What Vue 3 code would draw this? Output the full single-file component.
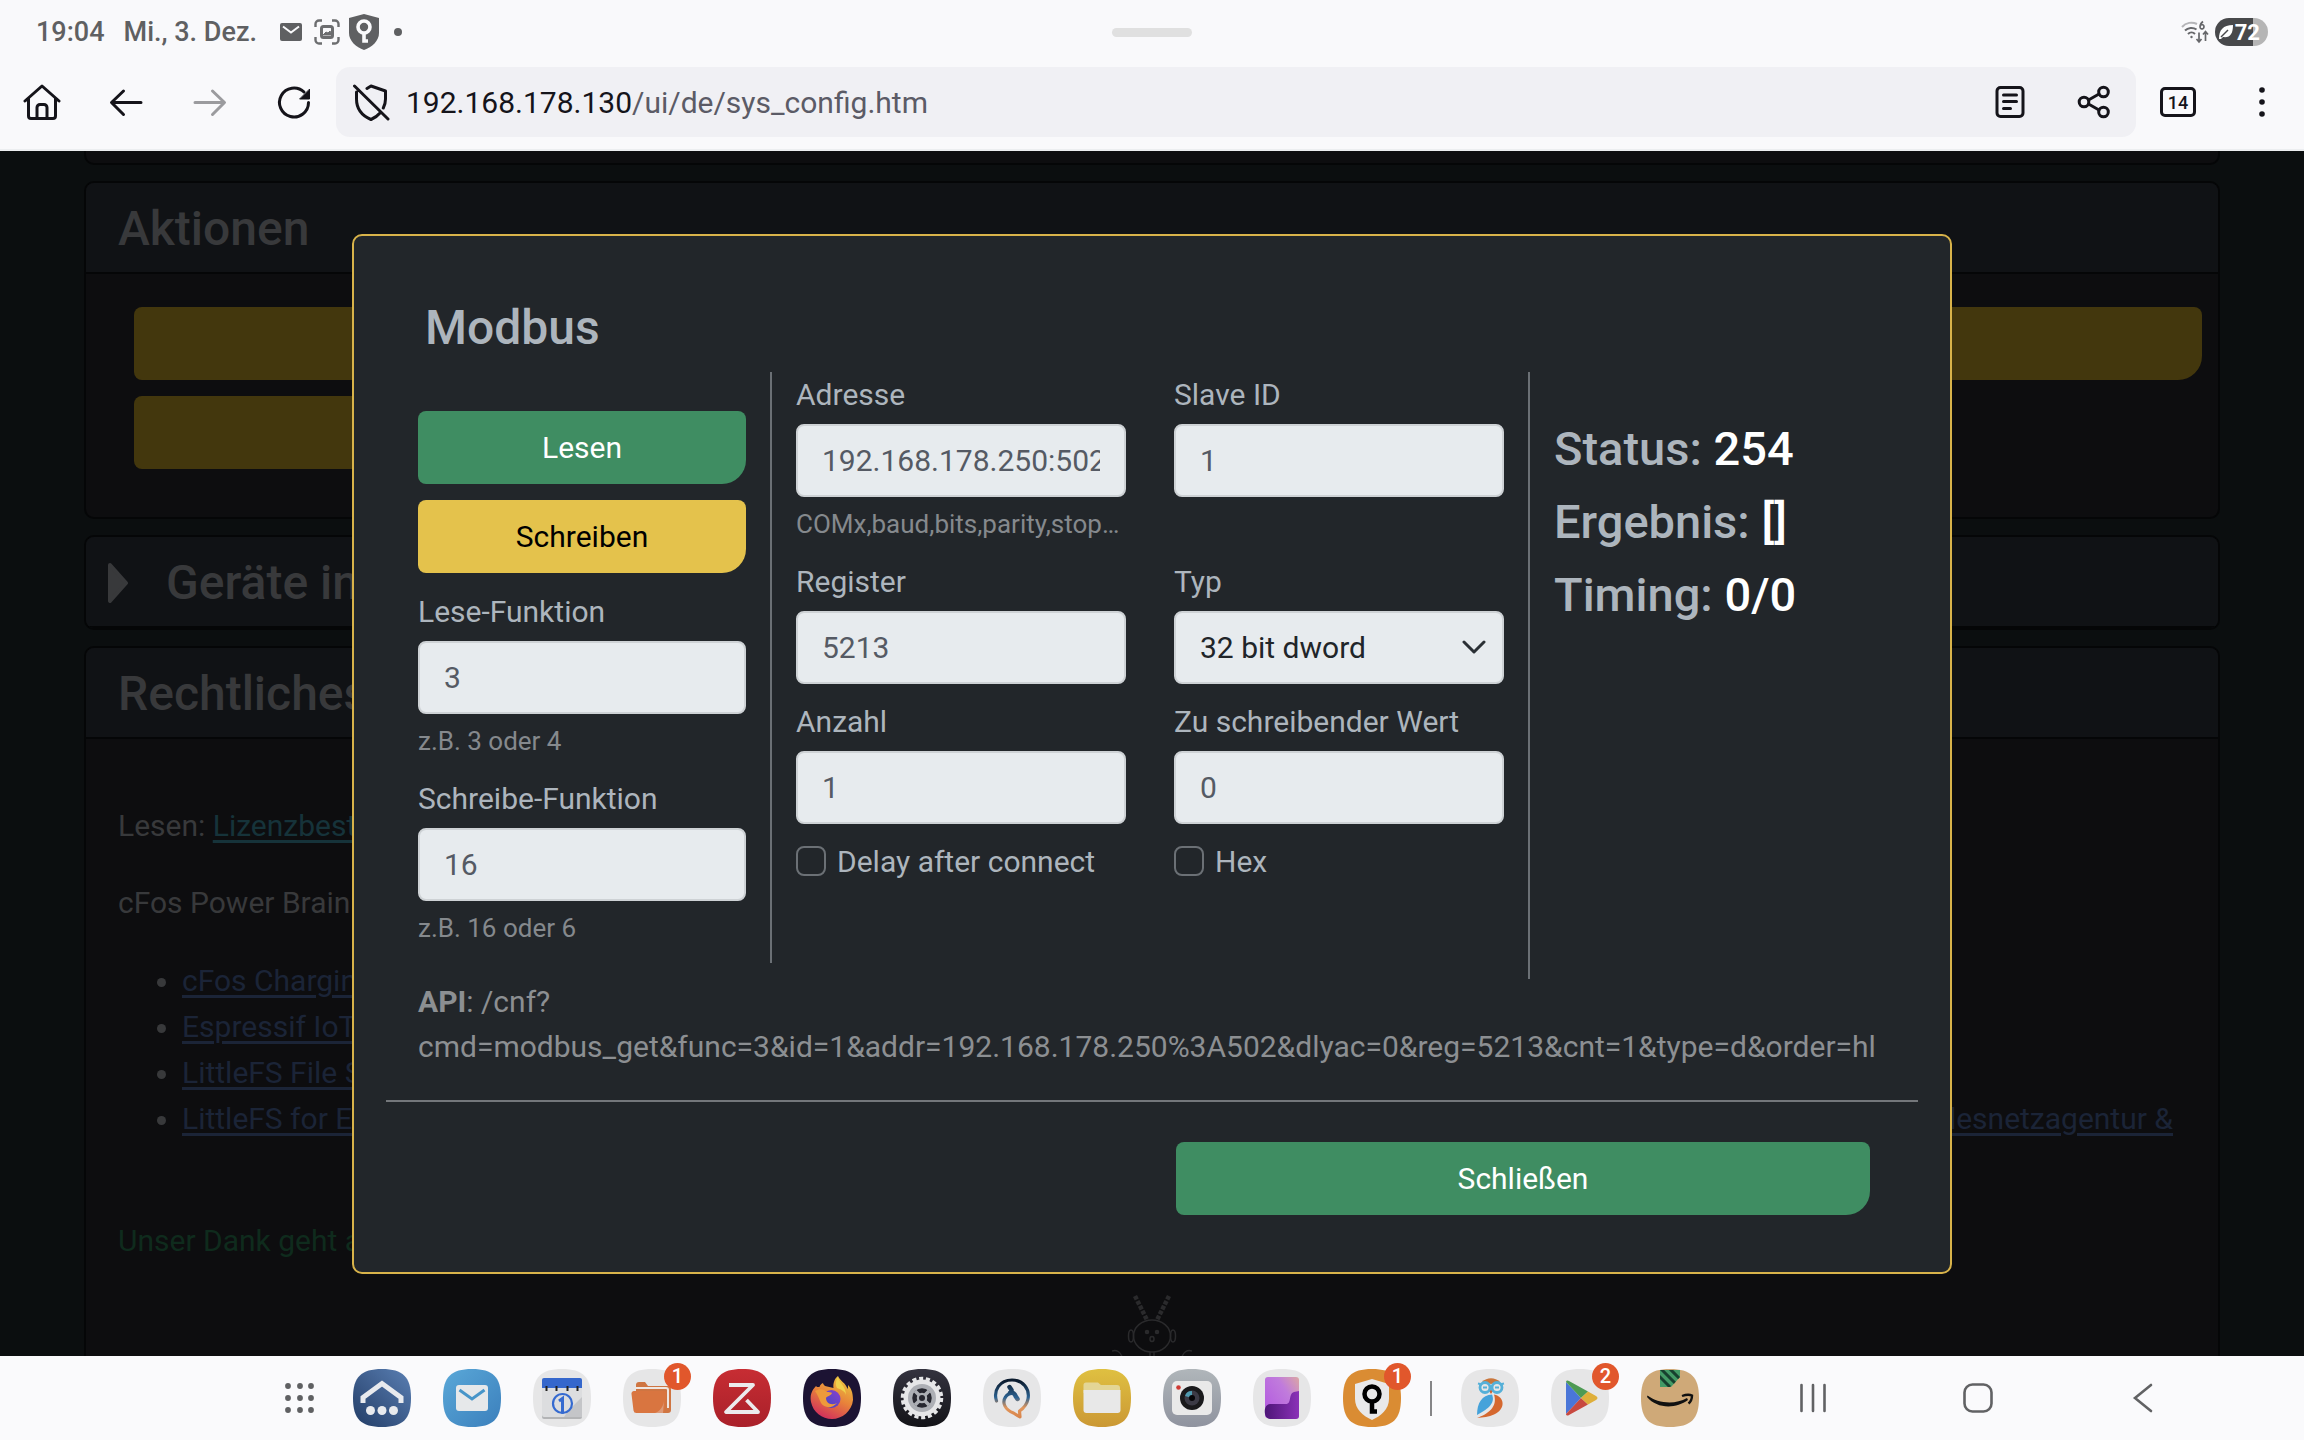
<template>
  <div class="screen">
    <header class="browser">
      <div class="status-bar">
        <div class="status-left">
          <span>19:04</span>
          <span>Mi., 3. Dez.</span>
          <span class="status-icons">
            <svg width="22" height="18" viewBox="0 0 22 18">
              <rect width="22" height="18" rx="2" fill="#5f6062" />
              <path d="M3 3.5l8 6 8-6" fill="none" stroke="#fafafc" stroke-width="2" />
            </svg>
            <svg width="26" height="26" viewBox="0 0 26 26" fill="none" stroke="#6c6d6f" stroke-width="2.4">
              <path d="M1.5 8V5a3.500 3.500 0 0 1 3.500-3.500h3M18 1.500h3a3.500 3.500 0 0 1 3.500 3.500v3M24.500 18v3a3.500 3.500 0 0 1-3.500 3.500h-3M8 24.500H5A3.500 3.500 0 0 1 1.500 21v-3" />
              <rect x="7.500" y="7.500" width="11" height="11" rx="2" stroke-width="3" />
              <path d="M9 16l3-3 2 1 2-2 2 4z" fill="#6c6d6f" stroke-width="1" />
            </svg>
            <svg width="32" height="36" viewBox="0 0 32 36">
              <path d="M16 0l15 4v15c0 8-7 14-15 17C8 33 1 27 1 19V4z" fill="#5f6062" />
              <circle cx="16" cy="13" r="6" fill="none" stroke="#fafafc" stroke-width="3.600" />
              <path d="M16 19v8h4" fill="none" stroke="#fafafc" stroke-width="3.600" />
            </svg>
            <i class="more-dot"></i>
          </span>
        </div>
        <i class="drag-handle"></i>
        <div class="status-right">
          <svg width="28" height="24" viewBox="0 0 28 24" fill="none" stroke="#66676a" stroke-width="2">
            <path d="M1 7C5 2.500 11 1.500 16 4" stroke="#b5b5b8" />
            <path d="M4 10.500c3-3 8-3.500 11.500-1" />
            <path d="M7 14c2-2 5-2 7 0" />
            <circle cx="10.500" cy="17" r="1.200" fill="#66676a" stroke="none" />
            <path d="M22 1.500c-2 1.500-3 3-3 5.500a2 2.200 0 1 0 0-.5" stroke-width="1.700" />
            <path d="M18 12.500v9M15.500 19l2.500 3 2.500-3M24.500 21v-9M22 14.500l2.500-3 2.500 3" stroke-width="1.700" />
          </svg>
          <span class="battery">
            <svg width="14" height="16" viewBox="0 0 14 16">
              <path d="M0 15C0 6 4 1 14 1c0 9-3 13-10 12l-2 2z" fill="#fff" />
              <path d="M2 13l7-7" stroke="#48494b" stroke-width="1.500" />
            </svg>
            72
          </span>
        </div>
      </div>

      <div class="toolbar">
        <button class="tool" aria-label="Startseite">
          <svg width="38" height="38" viewBox="0 0 38 38" class="line">
            <path d="M2 18L19 3l17 15M5.500 15.500V33a2.500 2.500 0 0 0 2.500 2.500h22a2.500 2.500 0 0 0 2.500-2.500V15.500M14 35V24.500a3 3 0 0 1 3-3h4a3 3 0 0 1 3 3V35" />
          </svg>
        </button>
        <button class="tool" aria-label="Zurück">
          <svg width="38" height="38" viewBox="0 0 38 38" class="line">
            <path d="M34 19.500H5M16.500 8l-12 11.500 12 12" />
          </svg>
        </button>
        <button class="tool" aria-label="Vor" disabled>
          <svg width="38" height="38" viewBox="0 0 38 38" class="line faded">
            <path d="M4 19.500h29M21.500 8l12 11.500-12 12" />
          </svg>
        </button>
        <button class="tool" aria-label="Neu laden">
          <svg width="38" height="38" viewBox="0 0 38 38" class="line">
            <path d="M33.500 19.500A14.500 14.500 0 1 1 29 9" />
            <path d="M34.500 6.500v9.500H25z" fill="#15141a" stroke-width="1" />
          </svg>
        </button>
        <div class="url-bar">
          <svg width="38" height="38" viewBox="0 0 38 38" class="line">
            <path d="M15 5.500l4-2.500 14.500 5v8c0 3-.7 6-2.200 9M28 30c-2.500 3-5.500 5-9 6.500C9.500 32.500 4.500 25 4.500 16V9M2.500 3L36 36" />
          </svg>
          <span class="url"><b>192.168.178.130</b>/ui/de/sys_config.htm</span>
          <button class="tool" aria-label="Leseansicht">
            <svg width="38" height="38" viewBox="0 0 38 38" class="line">
              <rect x="6" y="4.500" width="26" height="29" rx="3.500" />
              <path d="M12.500 12h13M12.500 18.500h13M12.500 25.500h7" />
            </svg>
          </button>
          <button class="tool" aria-label="Teilen">
            <svg width="38" height="38" viewBox="0 0 38 38" class="line">
              <circle cx="9" cy="19" r="4.800" />
              <circle cx="28.500" cy="9" r="4.800" />
              <circle cx="28.500" cy="29" r="4.800" />
              <path d="M13.500 17l10.500-6M13.500 21l10.500 6" />
            </svg>
          </button>
        </div>
        <button class="tool" aria-label="Tabs"><span class="tab-count">14</span></button>
        <button class="tool" aria-label="Menü">
          <svg width="38" height="38" viewBox="0 0 38 38" fill="#15141a">
            <circle cx="19" cy="7" r="2.800" />
            <circle cx="19" cy="19" r="2.800" />
            <circle cx="19" cy="31" r="2.800" />
          </svg>
        </button>
      </div>
    </header>

    <main class="page">
      <div class="cards">
        <section class="card card-end"></section>

        <section class="card">
          <h2 class="card-title">Aktionen</h2>
          <div class="card-actions">
            <button class="dim-btn" aria-label="Aktion 1"></button>
            <button class="dim-btn" aria-label="Aktion 2"></button>
            <button class="dim-btn" aria-label="Aktion 3"></button>
          </div>
        </section>

        <section class="card">
          <h2 class="card-title folded">
            <svg width="24" height="40" viewBox="0 0 24 40">
              <path d="M4 2l16 18L4 38z" fill="#38393b" stroke="#38393b" stroke-width="4" stroke-linejoin="round" />
            </svg>
            Geräte in
          </h2>
        </section>

        <section class="card">
          <h2 class="card-title">Rechtliches</h2>
          <div class="legal">
            <p>Lesen: <a href="#" class="license">Lizenzbest</a></p>
            <p>cFos Power Brain</p>
            <ul>
              <li v-for="item in credits" :key="item.name">
                <a href="#">{{ item.name }}</a>
                <a v-if="item.note" href="#" class="note">{{ item.note }}</a>
              </li>
            </ul>
            <p class="thanks">Unser Dank geht an</p>
            <svg class="mascot" width="80" height="120" viewBox="0 0 80 120" fill="none" stroke="#2a2a2c" stroke-width="1.500">
              <path d="M23 5l12 24M57 5L45 29" stroke-width="4.500" stroke-dasharray="4 1.500" />
              <ellipse cx="40" cy="45" rx="18.500" ry="16" />
              <ellipse cx="19" cy="45" rx="2.500" ry="6" />
              <ellipse cx="61" cy="45" rx="2.500" ry="6" />
              <circle cx="35" cy="41" r="1.500" fill="#2a2a2c" />
              <circle cx="45" cy="41" r="1.500" fill="#2a2a2c" />
              <ellipse cx="40" cy="48" rx="2" ry="2.500" />
              <path d="M0 60c5-2 9 2 10 6M80 60c-5-2-9 2-10 6M38 61v6M42 61v6" />
            </svg>
          </div>
        </section>
      </div>

      <div class="overlay">
        <form class="modal" role="dialog" aria-labelledby="modal-title" @submit.prevent>
          <h2 id="modal-title" class="modal-title">Modbus</h2>
          <div class="columns">
            <div class="col col-func">
              <button type="button" class="btn green">Lesen</button>
              <button type="button" class="btn yellow">Schreiben</button>
              <div class="field">
                <label for="read-func">Lese-Funktion</label>
                <input id="read-func" v-model="form.readFunc" type="text">
                <small>z.B. 3 oder 4</small>
              </div>
              <div class="field">
                <label for="write-func">Schreibe-Funktion</label>
                <input id="write-func" v-model="form.writeFunc" type="text">
                <small>z.B. 16 oder 6</small>
              </div>
            </div>

            <div class="col">
              <div class="field">
                <label for="address">Adresse</label>
                <input id="address" v-model="form.address" type="text">
                <small>COMx,baud,bits,parity,stopbits</small>
              </div>
              <div class="field">
                <label for="register">Register</label>
                <input id="register" v-model="form.register" type="text">
              </div>
              <div class="field">
                <label for="count">Anzahl</label>
                <input id="count" v-model="form.count" type="text">
              </div>
              <label class="check">
                <input v-model="form.delay" type="checkbox">
                Delay after connect
              </label>
            </div>

            <div class="col">
              <div class="field">
                <label for="slave">Slave ID</label>
                <input id="slave" v-model="form.slave" type="text">
                <small>&nbsp;</small>
              </div>
              <div class="field">
                <label for="type">Typ</label>
                <div class="select">
                  <select id="type" v-model="form.type">
                    <option value="w">16 bit word</option>
                    <option value="d">32 bit dword</option>
                  </select>
                  <svg width="24" height="16" viewBox="0 0 24 16">
                    <path d="M2 3l10 10L22 3" fill="none" stroke="#2b3035" stroke-width="3" stroke-linecap="round" stroke-linejoin="round" />
                  </svg>
                </div>
              </div>
              <div class="field">
                <label for="value">Zu schreibender Wert</label>
                <input id="value" v-model="form.value" type="text">
              </div>
              <label class="check">
                <input v-model="form.hex" type="checkbox">
                Hex
              </label>
            </div>

            <div class="col col-result">
              <div v-for="row in result" :key="row.label">
                {{ row.label }}: <span>{{ row.value }}</span>
              </div>
            </div>
          </div>

          <p class="api"><b>API</b>: /cnf?<wbr>{{ query }}</p>
          <div class="modal-footer">
            <button type="button" class="btn green">Schließen</button>
          </div>
        </form>
      </div>
    </main>

    <footer class="taskbar">
      <div class="apps">
        <button class="app" aria-label="Alle Apps">
          <svg viewBox="0 0 58 58" fill="#5f6062">
            <g v-for="y in [17, 29, 41]" :key="y">
              <circle v-for="x in [20, 32, 43]" :key="x" :cx="x" :cy="y" r="2.900" />
            </g>
          </svg>
        </button>

        <button class="app" aria-label="Smart Home">
          <svg viewBox="0 0 58 58">
            <linearGradient id="g-home" x1="1" y1="0" x2="0" y2="1">
              <stop offset="0" stop-color="#5a7fb3" />
              <stop offset="1" stop-color="#223c66" />
            </linearGradient>
            <path :d="tile" fill="url(#g-home)" />
            <path d="M10 34v-5.500l19-14 19 14V34" fill="none" stroke="#e8eaee" stroke-width="5" />
            <g fill="#e8eaee">
              <circle cx="17.500" cy="41.500" r="4.500" />
              <circle cx="29" cy="41.500" r="4.500" />
              <circle cx="40.500" cy="41.500" r="4.500" />
            </g>
          </svg>
        </button>

        <button class="app" aria-label="E-Mail">
          <svg viewBox="0 0 58 58">
            <linearGradient id="g-mail" x1="0" y1="0" x2="1" y2="1">
              <stop offset="0" stop-color="#5aa8d8" />
              <stop offset="1" stop-color="#3b7fbc" />
            </linearGradient>
            <path :d="tile" fill="url(#g-mail)" />
            <rect x="13" y="16" width="32" height="26" rx="3" fill="#e6e8ea" />
            <path d="M16.500 21L29 30l12.500-9" fill="none" stroke="#4795c9" stroke-width="3" />
          </svg>
        </button>

        <button class="app" aria-label="Kalender">
          <svg viewBox="0 0 58 58">
            <path :d="tile" fill="#e6e6e7" />
            <rect x="9" y="10" width="40" height="40" rx="2" fill="#b3b4b6" />
            <rect x="9" y="9" width="40" height="39" rx="2" fill="#dcdddf" />
            <path d="M9 19v-8a2 2 0 0 1 2-2h36a2 2 0 0 1 2 2v8z" fill="#3567cc" />
            <path d="M35 42l14-14v20H31z" fill="#c4c5c8" />
            <path d="M13.500 17v5M23.500 17v5M34.500 17v5M44.500 17v5" stroke="#222" stroke-width="2" />
            <circle cx="29.500" cy="34.500" r="9.500" fill="none" stroke="#356ad0" stroke-width="2.200" />
            <path d="M26 32l3.500-2.500v15" fill="none" stroke="#356ad0" stroke-width="3" />
          </svg>
        </button>

        <button class="app" aria-label="Dateien">
          <svg viewBox="0 0 58 58">
            <path :d="tile" fill="#e6e6e7" />
            <path d="M13 22v-6a3 3 0 0 1 3-3h6l3 4h20a3 3 0 0 1 3 3v21a3 3 0 0 1-3 3h-5z" fill="#cf7542" />
            <path d="M12 19h31a2 2 0 0 1 2 2v18" fill="none" stroke="#eee6e2" stroke-width="2" />
            <path d="M11 22h30a2.500 2.500 0 0 1 2.500 3l-2 16.500a3 3 0 0 1-3 2.500H13.500a3 3 0 0 1-3-2.500l-2-16.500A2.500 2.500 0 0 1 11 22z" fill="#d97540" />
            <path d="M41 32l-1 12h-8c5-2 8-6 9-12z" fill="#dd9a78" />
          </svg>
          <span class="badge">1</span>
        </button>

        <button class="app" aria-label="Zolar">
          <svg viewBox="0 0 58 58">
            <linearGradient id="g-red" x1="0" y1="0" x2="0" y2="1">
              <stop offset="0" stop-color="#c72d33" />
              <stop offset="1" stop-color="#a9202a" />
            </linearGradient>
            <path :d="tile" fill="url(#g-red)" />
            <path d="M16 16h24L13 43h32L33.500 31" fill="none" stroke="#ecebed" stroke-width="3.800" stroke-linejoin="round" />
          </svg>
        </button>

        <button class="app" aria-label="Firefox">
          <svg viewBox="0 0 58 58">
            <linearGradient id="g-fox" x1=".8" y1="0" x2=".3" y2="1">
              <stop offset="0" stop-color="#ecc93f" />
              <stop offset=".5" stop-color="#e8823a" />
              <stop offset="1" stop-color="#d12c5d" />
            </linearGradient>
            <linearGradient id="g-globe" x1="1" y1="0" x2="0" y2="1">
              <stop offset="0" stop-color="#8b3fd0" />
              <stop offset="1" stop-color="#3d4ac0" />
            </linearGradient>
            <path :d="tile" fill="#1c1333" />
            <path d="M13 17c-5 5-6 10-5 16 2 10 11 17 21 17s20-8 21-19c0-8-2-12-5-15 0 2 0 3-.5 4C43 14 37 12 35 7c-4 3-5 8-4.500 12L22 17c-1-1-2-2-2-3-2 1-3 2-3.500 4-2 0-3 0-3.500-1z" fill="url(#g-fox)" />
            <circle cx="28.500" cy="30" r="9" fill="url(#g-globe)" />
            <path d="M12 22c5-3 9-2 12 1 2 0 4 0 5 1-1 3-5 3-6 5 0 5 5 8 11 5-5 6-13 5-16 0-2-4-3-8-6-12z" fill="#ee9a3b" />
            <path d="M35 8c1 6 8 9 8 18-1-4-6-6-9-7-2-4-1-8 1-11z" fill="#efd04c" />
          </svg>
        </button>

        <button class="app" aria-label="Einstellungen">
          <svg viewBox="0 0 58 58">
            <linearGradient id="g-dark" x1="0" y1="0" x2="0" y2="1">
              <stop offset="0" stop-color="#34333f" />
              <stop offset="1" stop-color="#131318" />
            </linearGradient>
            <path :d="tile" fill="url(#g-dark)" />
            <circle cx="29" cy="29" r="19.500" fill="none" stroke="#e6e6e8" stroke-width="3.500" stroke-dasharray="4.100 2.700" />
            <circle cx="29" cy="29" r="18.500" fill="#e6e6e8" />
            <circle cx="29" cy="29" r="14" fill="#adafb5" />
            <circle cx="29" cy="29" r="7.500" fill="none" stroke="#26262f" stroke-width="4.500" />
            <path d="M22 22l14 14M36 22L22 36" stroke="#adafb5" stroke-width="3.500" />
            <circle cx="29" cy="29" r="3" fill="#26262f" />
          </svg>
        </button>

        <button class="app" aria-label="Smartbird">
          <svg viewBox="0 0 58 58">
            <linearGradient id="g-bird" x1="0" y1="8" x2="0" y2="49" gradientUnits="userSpaceOnUse">
              <stop offset=".1" stop-color="#0b1b2e" />
              <stop offset=".5" stop-color="#2c6291" />
              <stop offset=".75" stop-color="#e0965c" />
              <stop offset="1" stop-color="#d8834a" />
            </linearGradient>
            <path :d="tile" fill="#e6e6e7" />
            <g fill="none" stroke="url(#g-bird)" stroke-width="3.200" stroke-linecap="round" stroke-linejoin="round">
              <path d="M13.500 32C10 21 17 11 29 11c11 0 18 9 16 19-1 5-4 9-8.500 12l.5 6-6.500-4c-8-3-12-10-8-16 1-2 3-3 5-4" />
              <path d="M26.500 18l2 3M27 24c3-1 5 1 5.500 3l2 3" stroke-width="4.500" />
            </g>
          </svg>
        </button>

        <button class="app" aria-label="Eigene Dateien">
          <svg viewBox="0 0 58 58">
            <linearGradient id="g-gold" x1="0" y1="0" x2="0" y2="1">
              <stop offset="0" stop-color="#dfc041" />
              <stop offset="1" stop-color="#cb9834" />
            </linearGradient>
            <path :d="tile" fill="url(#g-gold)" />
            <path d="M10.500 24v-8a2.500 2.500 0 0 1 2.500-2.500h12l3 2.500h16a3 3 0 0 1 3 3v5z" fill="#e3d595" />
            <path d="M10.500 21h37v20a3 3 0 0 1-3 3h-31a3 3 0 0 1-3-3z" fill="#e8e8e8" />
          </svg>
        </button>

        <button class="app" aria-label="Kamera">
          <svg viewBox="0 0 58 58">
            <linearGradient id="g-cam" x1="0" y1="0" x2="0" y2="1">
              <stop offset="0" stop-color="#b0b6ba" />
              <stop offset="1" stop-color="#8f939f" />
            </linearGradient>
            <path :d="tile" fill="url(#g-cam)" />
            <rect x="9" y="12" width="40" height="34" rx="5" fill="#e9e9e9" />
            <circle cx="29" cy="29" r="12" fill="#1a1a1c" />
            <circle cx="29" cy="29" r="7.500" fill="#3c3b46" />
            <path d="M29 29v-7a7 7 0 0 0-7 5z" fill="#4f9bb0" />
            <circle cx="29" cy="29" r="3" fill="#060608" />
            <circle cx="15.500" cy="18.500" r="2.300" fill="#cf3a34" />
          </svg>
        </button>

        <button class="app" aria-label="Galaxy Fold">
          <svg viewBox="0 0 58 58">
            <linearGradient id="g-fold" x1="0" y1=".8" x2="1" y2="0">
              <stop offset="0" stop-color="#b45be0" />
              <stop offset=".6" stop-color="#c07bdc" />
              <stop offset="1" stop-color="#dba7a3" />
            </linearGradient>
            <linearGradient id="g-fold-dark" x1="0" y1="0" x2="1" y2="0">
              <stop offset="0" stop-color="#4d1677" />
              <stop offset="1" stop-color="#8b31b8" />
            </linearGradient>
            <path :d="tile" fill="#e6e6e7" />
            <rect x="12" y="8" width="34" height="41" rx="3" fill="url(#g-fold)" />
            <path d="M46 22v25a3 3 0 0 1-3 3H17c-7 0-7-15 0-15h16c6 0 2-10 8-12z" fill="url(#g-fold-dark)" />
          </svg>
        </button>

        <button class="app" aria-label="VPN">
          <svg viewBox="0 0 58 58">
            <path :d="tile" fill="#da8c33" />
            <path d="M29 10l17 5v15c0 10-8 17-17 21-9-4-17-11-17-21V15z" fill="#e9e9ea" />
            <circle cx="29" cy="25" r="7.500" fill="none" stroke="#000" stroke-width="4.500" />
            <path d="M29 32v10.500h5" fill="none" stroke="#000" stroke-width="4.500" />
          </svg>
          <span class="badge">1</span>
        </button>

        <i class="app-divider"></i>

        <button class="app" aria-label="Eule">
          <svg viewBox="0 0 58 58">
            <path :d="tile" fill="#e6e6e7" />
            <path d="M21 13c5-5 13-5 18 0l-9 2z" fill="#c9763c" />
            <path d="M27.500 21l2.500 4 2.500-4z" fill="#d2622f" />
            <circle cx="24" cy="18.500" r="5" fill="#e6e6e7" stroke="#56b0d8" stroke-width="2.800" />
            <circle cx="36" cy="18.500" r="5" fill="#e6e6e7" stroke="#56b0d8" stroke-width="2.800" />
            <path d="M17 14.500l4 1M43 14.500l-4 1M22 18.500h4M34 18.500h4" stroke="#56b0d8" stroke-width="2" />
            <path d="M31 25.500C21 26 16 34 16 46c9-5 19-11 15-20.500z" fill="#45a2da" />
            <path d="M33 25.500c11 2 12 15 0 20-5 2.500-11 3-17 3.500 11-4 21-11 17-23.500z" fill="#d5682f" />
          </svg>
        </button>

        <button class="app" aria-label="Play Store">
          <svg viewBox="0 0 58 58">
            <path :d="tile" fill="#e6e6e7" />
            <path d="M15 13v32l15-16z" fill="#4a76d8" />
            <path d="M15 13c0-1.500 1.500-2 3-1l19 10.500-7 6.500z" fill="#4e9a54" />
            <path d="M15 45c0 1.500 1.500 2 3 1l19-10.500-7-6.500z" fill="#c84940" />
            <path d="M37 22.500l8 4.500c2 1 2 3 0 4l-8 4.500-7-6.500z" fill="#dfaf3b" />
          </svg>
          <span class="badge">2</span>
        </button>

        <button class="app" aria-label="Amazon">
          <svg viewBox="0 0 58 58">
            <clipPath id="c-tape"><path d="M19 1h20v7l-9 10H19z" /></clipPath>
            <path :d="tile" fill="#cfa978" />
            <g clip-path="url(#c-tape)">
              <path d="M19 0h21v18H19z" fill="#439a66" />
              <path d="M17 6l12 12M19-1l17 17M28-1l12 12" stroke="#17402f" stroke-width="3" />
            </g>
            <path d="M6.500 26.500C17 34.500 34 36 46 29l1 2c-12 9-31 9-41-3z" fill="#111" />
            <path d="M41 27c4-1.500 8-1.500 10-.5 0 3-1 6-3.500 8" fill="none" stroke="#111" stroke-width="2.400" />
          </svg>
        </button>
      </div>

      <nav class="nav-keys">
        <button aria-label="Zuletzt verwendet">
          <svg width="34" height="34" viewBox="0 0 34 34" class="key">
            <path d="M5.500 4v26M17 4v26M28.500 4v26" />
          </svg>
        </button>
        <button aria-label="Home">
          <svg width="34" height="34" viewBox="0 0 34 34" class="key">
            <rect x="3.500" y="3.500" width="27" height="27" rx="8" />
          </svg>
        </button>
        <button aria-label="Zurück">
          <svg width="34" height="34" viewBox="0 0 34 34" class="key">
            <path d="M25 4L9 17l16 13" />
          </svg>
        </button>
      </nav>
    </footer>
  </div>
</template>

<script setup>
import { computed, reactive } from 'vue'

// rounded app tile outline on a 58x58 grid
const tile = 'M29 0C50 0 58 8 58 29S50 58 29 58 0 50 0 29 8 0 29 0Z'

const form = reactive({
  readFunc: '3',
  writeFunc: '16',
  address: '192.168.178.250:502',
  slave: '1',
  register: '5213',
  type: 'd',
  count: '1',
  value: '0',
  delay: false,
  hex: false
})

const result = [
  { label: 'Status', value: '254' },
  { label: 'Ergebnis', value: '[]' },
  { label: 'Timing', value: '0/0' }
]

const credits = [
  { name: 'cFos Charging' },
  { name: 'Espressif IoT' },
  { name: 'LittleFS File System' },
  { name: 'LittleFS for ESP', note: 'Bundesnetzagentur &' }
]

const query = computed(() => {
  const addr = encodeURIComponent(form.address)
  const dlyac = form.delay ? 1 : 0
  return `cmd=modbus_get&func=${form.readFunc}&id=${form.slave}&addr=${addr}&dlyac=${dlyac}` +
    `&reg=${form.register}&cnt=${form.count}&type=${form.type}&order=hl`
})
</script>

<style>
body {
  background: #0b0e0f;
}
</style>

<style scoped>
.screen {
  display: flex;
  flex-direction: column;
  height: 100vh;
  overflow: hidden;
  font-family: Roboto, "Liberation Sans", sans-serif;
  font-size: 30px;
  line-height: 45px;
}

.screen * {
  box-sizing: border-box;
}

button {
  font: inherit;
  border: none;
  padding: 0;
  background: none;
  cursor: pointer;
}

svg {
  display: block;
  flex: none;
}

/* status bar + toolbar */
.browser {
  background: #f9f9fb;
  border-bottom: 2px solid #eceef0;
}

.status-bar {
  display: grid;
  grid-template-columns: 1fr auto 1fr;
  align-items: center;
  height: 64px;
  padding: 0 36px;
  color: #5f6062;
  font-size: 27px;
  font-weight: 500;
}

.status-left {
  display: flex;
  align-items: center;
  gap: 19px;
}

.status-icons {
  display: flex;
  align-items: center;
  gap: 8px;
}

.status-icons svg:first-child {
  margin: 0 4px;
}

.more-dot {
  width: 8px;
  height: 8px;
  margin-left: 6px;
  border-radius: 50%;
  background: #5f6062;
}

.drag-handle {
  width: 80px;
  height: 9px;
  border-radius: 5px;
  background: #e0e0e0;
}

.status-right {
  display: flex;
  justify-content: flex-end;
  align-items: center;
  gap: 6px;
}

.battery {
  display: flex;
  align-items: center;
  gap: 2px;
  height: 28px;
  padding: 0 8px 0 4px;
  border-radius: 14px;
  background: linear-gradient(90deg, #48494b 72%, #b5b5b5 72%);
  color: #fff;
  font-size: 22px;
  font-weight: 700;
}

.toolbar {
  display: flex;
  align-items: center;
  padding: 3px 0 12px;
}

.tool {
  display: flex;
  align-items: center;
  justify-content: center;
  width: 84px;
  height: 70px;
}

.line {
  fill: none;
  stroke: #15141a;
  stroke-width: 3;
  stroke-linecap: round;
  stroke-linejoin: round;
}

.faded {
  stroke: #9b9b9e;
}

.url-bar {
  flex: 1;
  display: flex;
  align-items: center;
  height: 70px;
  padding-left: 16px;
  border-radius: 14px;
  background: #f0f0f4;
}

.url {
  flex: 1;
  padding-left: 16px;
  color: #5b5b66;
}

.url b {
  font-weight: 400;
  color: #15141a;
}

.tab-count {
  display: flex;
  align-items: center;
  justify-content: center;
  width: 36px;
  height: 30px;
  border: 3px solid #15141a;
  border-radius: 5px;
  color: #15141a;
  font-size: 18px;
  font-weight: 500;
}

/* dimmed page behind the dialog */
.page {
  flex: 1;
  min-height: 0;
  position: relative;
  overflow: hidden;
  background: #0b0e0f;
  color: #38393b;
}

.cards {
  padding: 0 84px;
}

.card {
  margin-bottom: 16px;
  border: 2px solid #050607;
  border-radius: 10px;
  background: #0d0d0f;
  overflow: hidden;
}

.card-end {
  height: 14px;
  border-top: none;
  border-radius: 0 0 10px 10px;
}

.card-title {
  display: flex;
  align-items: center;
  margin: 0;
  padding: 17px 32px 14px;
  border-bottom: 2px solid #050607;
  background: #101215;
  font-size: 48px;
  font-weight: 500;
  line-height: 58px;
}

.folded {
  gap: 36px;
  padding-left: 20px;
}

.card-actions {
  display: grid;
  grid-template-columns: 1fr 1fr;
  gap: 16px;
  padding: 33px 16px 48px 48px;
}

.dim-btn {
  height: 73px;
  border-radius: 8px 8px 24px 8px;
  background: #43370d;
}

.legal {
  padding: 64px 32px 0;
}

.legal p {
  margin: 0 0 32px;
}

.legal a {
  color: #1b2437;
  text-underline-offset: 4px;
}

.legal a.license {
  color: #16333a;
}

.legal ul {
  margin: 33px 0 76px;
  padding-left: 64px;
  line-height: 46px;
}

.legal .note {
  float: right;
  padding-right: 13px;
}

.legal .thanks {
  margin: 0;
  color: #0f2b1d;
}

.mascot {
  margin: 28px auto 0;
}

/* dialog */
.overlay {
  position: absolute;
  inset: 0;
  display: flex;
  align-items: center;
  justify-content: center;
}

.modal {
  width: 100%;
  max-width: 1600px;
  padding: 63px 32px 57px;
  border: 2px solid #d8b34a;
  border-radius: 10px;
  background: #22262a;
  color: #adb5bd;
}

.modal-title {
  margin: 0 0 15px;
  padding: 0 39px;
  font-size: 48px;
  font-weight: 500;
  line-height: 58px;
}

.columns {
  display: grid;
  grid-template-columns: repeat(4, minmax(0, 1fr));
  padding: 0 12px 0 8px;
}

.col {
  padding: 0 24px;
}

.col-func {
  margin-bottom: 16px;
  padding-top: 39px;
  border-right: 2px solid #6b7075;
}

.col-result {
  padding-top: 40px;
  border-left: 2px solid #6b7075;
  font-size: 47px;
  font-weight: 500;
  line-height: 73px;
}

.col-result span {
  color: #fff;
}

.btn {
  display: block;
  width: 100%;
  height: 73px;
  border-radius: 8px 8px 24px 8px;
}

.col-func .btn {
  margin-bottom: 16px;
}

.green {
  background: #3f8d62;
  color: #fff;
}

.yellow {
  background: #e4c24c;
  color: #000;
}

.field {
  margin-bottom: 15px;
}

.field label {
  display: block;
  margin-bottom: 7px;
}

.field input,
.field select {
  display: block;
  width: 100%;
  height: 73px;
  padding: 0 24px;
  border: 2px solid #ced2d5;
  border-radius: 8px;
  background: #e7ebee;
  color: #555a64;
  font: inherit;
  appearance: none;
}

.field select {
  padding-right: 60px;
  color: #212529;
}

.select {
  position: relative;
}

.select svg {
  position: absolute;
  right: 18px;
  top: 28px;
  pointer-events: none;
}

.field small {
  display: block;
  margin-top: 8px;
  overflow: hidden;
  color: #85898d;
  font-size: 26px;
  line-height: 39px;
  text-overflow: ellipsis;
  white-space: nowrap;
}

.check {
  display: flex;
  align-items: center;
  gap: 11px;
}

.check input {
  width: 30px;
  height: 30px;
  margin: 0;
  border: 2px solid #6b7075;
  border-radius: 8px;
  appearance: none;
}

.api {
  margin: 0 0 31px;
  padding: 0 24px 0 32px;
  color: #8c8f92;
}

.modal-footer {
  display: grid;
  grid-template-columns: 1fr 1fr;
  padding: 40px 24px 0;
  border-top: 2px solid #74777b;
}

.modal-footer .btn {
  grid-column: 2;
  width: auto;
  margin: 0 24px;
}

/* system taskbar */
.taskbar {
  display: flex;
  align-items: center;
  justify-content: space-between;
  height: 84px;
  padding: 0 144px 0 268px;
  background: #fafafc;
}

.apps,
.nav-keys {
  display: flex;
  align-items: center;
}

.apps {
  gap: 32px;
}

.app {
  position: relative;
  width: 58px;
  height: 58px;
}

.app:first-child {
  margin-right: -5px;
}

.badge {
  position: absolute;
  top: -6px;
  right: -10px;
  width: 27px;
  height: 27px;
  border-radius: 50%;
  background: #e1572c;
  color: #fff;
  font-size: 20px;
  font-weight: 500;
  line-height: 27px;
}

.app-divider {
  width: 2px;
  height: 35px;
  margin: 0 -3px;
  background: #858587;
}

.nav-keys {
  gap: 131px;
}

.key {
  fill: none;
  stroke: #616264;
  stroke-width: 2.6;
  stroke-linecap: round;
}
</style>
